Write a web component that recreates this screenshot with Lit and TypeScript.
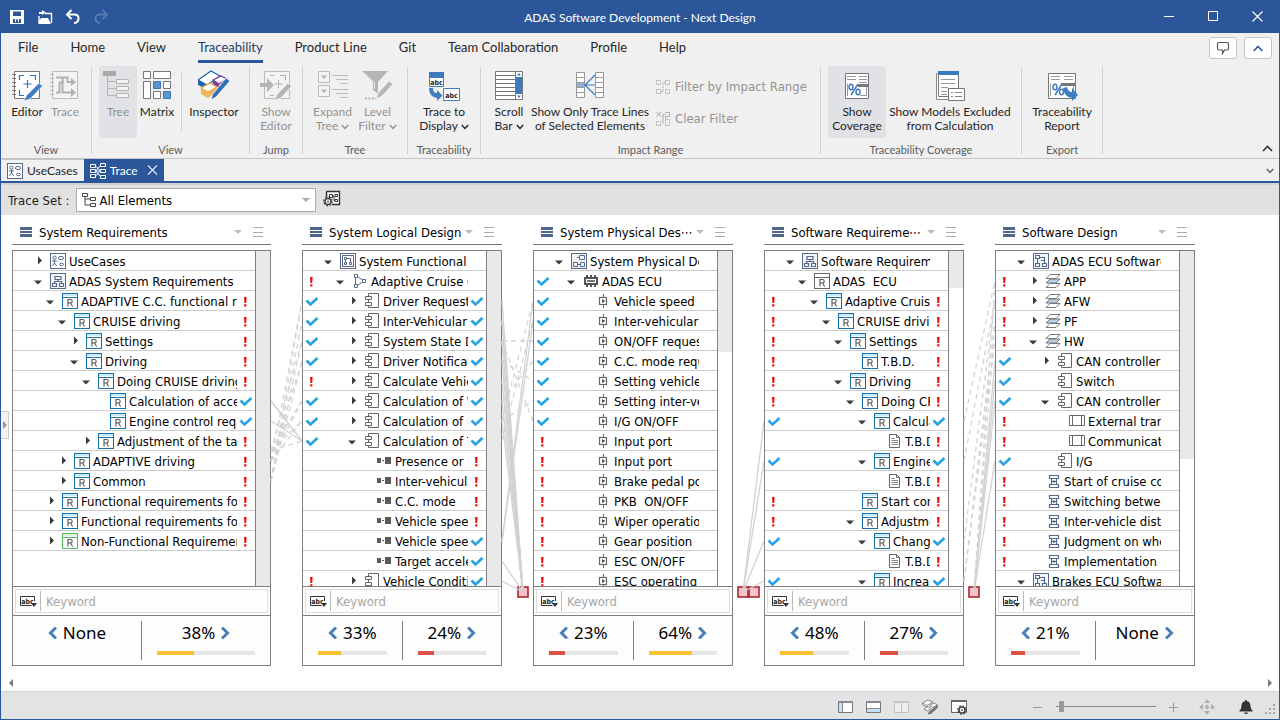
import { LitElement, html, css, svg, nothing } from "lit";
import { customElement, property } from "lit/decorators.js";
import { classMap } from "lit/directives/class-map.js";

const SANS = css`Lato, "Open Sans", sans-serif`;
const WIDE = css`"DejaVu Sans Condensed", "DejaVu Sans", sans-serif`;

/* ---------- small (16px) glyphs ---------- */
const reqIcon = (line: string, band: string) => svg`
  <rect x="0.5" y="0.5" width="15" height="15" fill="#fff" stroke=${line}/>
  <rect x="1" y="1" width="14" height="2" fill=${band}/>
  <path d="M1 4.5H15" stroke=${line}/>
  <path d="M6 13.5V6.5H8.6Q10.2 6.5 10.2 8.3Q10.2 10 8.6 10H6M8.5 10L10.6 13.5" fill="none" stroke="#555" stroke-width="1.1"/>`;

const glyphs: Record<string, unknown> = {
  req: reqIcon("#1570a6", "#cdeafa"),
  reqGreen: reqIcon("#5cb85c", "#dff3dc"),
  reqPlain: reqIcon("#666", "#fff"),
  usecase: svg`
    <rect x="0.5" y="0.5" width="15" height="15" fill="#fff" stroke="#56698b"/>
    <circle cx="4.5" cy="4.7" r="1.6" fill="none" stroke="#56698b"/>
    <path d="M4.5 6.5V10M2 8H7M2.3 13L4.5 10L6.7 13" fill="none" stroke="#56698b"/>
    <ellipse cx="11" cy="5" rx="2.6" ry="1.6" fill="none" stroke="#56698b"/>
    <ellipse cx="11.5" cy="11.5" rx="2" ry="1.2" fill="none" stroke="#56698b"/>`,
  hier: svg`
    <rect x="0.5" y="0.5" width="15" height="15" fill="#f4f6fa" stroke="#56698b"/>
    <path d="M5 3.5H11V6.5H5ZM2.5 10.5H6.5V13.5H2.5ZM9.5 10.5H13.5V13.5H9.5ZM8 6.5V8.5M4.5 10.5V8.5H11.5V10.5" fill="none" stroke="#56698b" stroke-width="1.2"/>`,
  func: svg`
    <rect x="0.5" y="0.5" width="15" height="15" fill="#fff" stroke="#56698b"/>
    <rect x="2.5" y="2.5" width="11" height="11" fill="none" stroke="#56698b"/>
    <path d="M4.5 4.5H6.5V6.5H4.5ZM9.5 9.5H11.5V11.5H9.5ZM4.5 9.5H6.5V11.5H4.5ZM6.5 5.5H10.5V9.5M5.5 6.5V9.5" fill="none" stroke="#56698b"/>`,
  flow: svg`
    <path d="M2.5 1.5H5.5V4.5H2.5ZM2.5 11.5H5.5V14.5H2.5ZM10.5 6.5H13.5V9.5H10.5ZM3.5 4.5V11.5M5.5 3.5L10.5 7M5.5 12.5L10.5 9" fill="#fff" stroke="#56698b"/>`,
  comp: svg`
    <path d="M4.5 3.5V0.5H14.5V14.5H4.5V12.5M4.5 6.5V9.5" fill="none" stroke="#666"/>
    <path d="M1.5 3.5H7.5V6.5H1.5ZM1.5 9.5H7.5V12.5H1.5Z" fill="#fff" stroke="#666"/>`,
  link: svg`<path d="M1 5H5V10H1ZM9 4H15V11H9Z" fill="#5a5a5a"/><path d="M6 7.5H8" stroke="#5a5a5a"/>`,
  phys: svg`
    <rect x="0.5" y="0.5" width="15" height="15" fill="#f4f6fa" stroke="#56698b"/>
    <path d="M8.5 2.5H13.5V6.5H8.5ZM2.5 9.5H6.5V13.5H2.5ZM9.5 9.5H13.5V13.5H9.5ZM6.5 11.5H9.5M6 4.5H8.5" fill="none" stroke="#56698b"/>`,
  chip: svg`
    <path d="M1 4H15V12H1Z" fill="#555"/><path d="M3 6H13V10H3Z" fill="#fff"/><path d="M4 7.2H12V8.8H4Z" fill="#555"/>
    <path d="M4 2V4M8 2V4M12 2V4M4 12V14M8 12V14M12 12V14" stroke="#555" stroke-width="2"/>`,
  port: svg`
    <path d="M8.5 1V4M8.5 12V15" stroke="#666"/><rect x="4.5" y="4.5" width="7" height="7" fill="#fff" stroke="#666" stroke-width="1.2"/>
    <path d="M7 6L10.5 8L7 10Z" fill="#555"/>`,
  doc: svg`
    <path d="M3.5 1.5H10.5L13.5 4.5V14.5H3.5ZM10.5 1.5V4.5H13.5" fill="#fff" stroke="#666"/>
    <path d="M5.5 5.5H9M5.5 7.5H12M5.5 9.5H12M5.5 11.5H12" stroke="#888"/>`,
  soft: svg`
    <rect x="0.5" y="0.5" width="15" height="15" fill="#f4f6fa" stroke="#56698b"/>
    <path d="M2.5 2.5H6.5V5.5H2.5ZM2.5 10.5H6.5V13.5H2.5ZM9.5 10.5H13.5V13.5H9.5ZM4.5 5.5V10.5M6.5 4.5H11.5V10.5M8 7.5H11.5" fill="none" stroke="#56698b" stroke-width="1.1"/>`,
  layers: svg`
    <path d="M5 1.5H15L11 5.5H1Z" fill="#fff" stroke="#777"/>
    <path d="M5 6H15L11 10H1Z" fill="#b8cde6" stroke="#777"/>
    <path d="M5 10.5H15L11 14.5H1Z" fill="#fff" stroke="#777"/>`,
  block: svg`<path d="M0.5 2.5H15.5V12.5H0.5ZM3.5 2.5V12.5M12.5 2.5V12.5" fill="#fff" stroke="#666"/>`,
  seq: svg`
    <path d="M4.5 2.5H13.5V5.5H4.5ZM4.5 11.5H13.5V14.5H4.5ZM6.5 5.5V11.5M11.5 5.5V11.5M6.5 8.5H11.5M9 7V10" fill="none" stroke="#56698b" stroke-width="1.2"/>`,
  trace: svg`
    <path d="M0.5 1.5H5.5V4.5H0.5ZM0.5 6.5H5.5V9.5H0.5ZM0.5 11.5H5.5V14.5H0.5ZM10.5 0.5H15.5V3.5H10.5ZM10.5 6.5H15.5V9.5H10.5ZM10.5 12.5H15.5V15.5H10.5ZM5.5 8H10.5M5.5 8L10.5 2.5M5.5 8L10.5 13.5M5.5 3L10.5 8M5.5 13L10.5 8" fill="none" stroke="#fff"/>`,
};

const glyph = (name: string) =>
  html`<svg class="g16" width="16" height="16" viewBox="0 0 16 16" aria-hidden="true">${glyphs[name]}</svg>`;

/* ---------- large ribbon pictures ---------- */
const big: Record<string, unknown> = {
  editor: svg`
    <path d="M3.5 1.5H28.5V28.5H3.5Z" fill="#fff" stroke="#777"/>
    <path d="M1 4.5H5M1 8.5H5M1 12.5H5M1 16.5H5M1 20.5H5M1 24.5H5" stroke="#777"/>
    <path d="M8.5 10V5.5H13M19 5.5H24.5V10M8.5 20V25.5H13M16.5 10V18M12.5 14H20.5" fill="none" stroke="#2f75b9" stroke-width="1.2"/>
    <path d="M28 13L31.5 16L19 29L13 31L15.5 25.5Z" fill="#3f7fc1" stroke="#fff" stroke-width="0.6"/>`,
  trace: svg`
    <path d="M3.5 1.5H28.5V28.5H3.5Z" fill="#f3f3f3" stroke="#bbb"/>
    <path d="M1 4.5H5M1 8.5H5M1 12.5H5M1 16.5H5M1 20.5H5M1 24.5H5" stroke="#bbb"/>
    <path d="M7 7.5H13.5V22.5H23M7 22.5H10.5V12.5H15M13.5 7.5H18.5V12H23" fill="none" stroke="#b2b2b2" stroke-width="2"/>
    <path d="M22 8L27 12L22 16ZM22 18L27 22.5L22 27Z" fill="#b2b2b2"/>`,
  tree: svg`
    <path d="M1 1H14V6H1Z" fill="#aaa"/>
    <path d="M5.5 6V25.5H14M5.5 11.5H14M5.5 18.5H14" fill="none" stroke="#b5b5b5"/>
    <path d="M14.5 9.5H26.5V13.5H14.5ZM14.5 16.5H26.5V20.5H14.5ZM14.5 23.5H26.5V27.5H14.5Z" fill="#f3f3f3" stroke="#b5b5b5"/>`,
  matrix: svg`
    <path d="M2.5 1.5H9.5V8.5H2.5ZM12.5 1.5H29.5V8.5H12.5ZM2.5 11.5H9.5V28.5H2.5ZM22.5 11.5H29.5V18.5H22.5ZM12.5 21.5H19.5V28.5H12.5Z" fill="#fff" stroke="#777"/>
    <path d="M12.5 11.5H19.5V18.5H12.5ZM22.5 21.5H29.5V28.5H22.5Z" fill="#5b95cd" stroke="#3a76b4"/>`,
  inspector: svg`
    <path d="M0 10L13 1L22 6L9 15Z" fill="#fff" stroke="#1f66ad" stroke-width="1.3"/><path d="M0 10L9 15V19L0 15Z" fill="#1f66ad"/>
    <path d="M15 10L23 6L29 9L21 14Z" fill="#fff" stroke="#7e3b9d" stroke-width="1.3"/><path d="M15 10L21 14V18L15 15Z" fill="#7e3b9d"/>
    <path d="M3 18L12 13L19 17L10 22Z" fill="#fff" stroke="#eaa743" stroke-width="1.3"/><path d="M3 18L10 22L19 17V22L10 28L3 24Z" fill="#edb45c"/>
    <path d="M28 8L32 11L18 27L13 30L14.5 24.5Z" fill="#2e6fb5" stroke="#fff" stroke-width="0.8"/>`,
  showEditor: svg`
    <path d="M4.5 1.5H29.5V28.5H4.5Z" fill="#f3f3f3" stroke="#bbb"/>
    <path d="M10 5.5H14M20 5.5H25.5V10M10 25.5H14M18.5 10V18M14.5 14H22.5" fill="none" stroke="#b2b2b2"/>
    <path d="M0 13H7V8L14 15L7 22V17H0Z" fill="#b5b5b5"/>
    <path d="M28 13L32 16L21 28L14 30.5L17 24.5Z" fill="#b5b5b5" stroke="#f3f3f3"/>`,
  expand: svg`
    <path d="M1.5 1.5H12.5V12.5H1.5ZM1.5 15.5H12.5V26.5H1.5Z" fill="#f3f3f3" stroke="#bbb"/>
    <path d="M4 5.5H10L7 9ZM4 19.5H10L7 23Z" fill="#b2b2b2"/>
    <path d="M15 5.5H31M19 9.5H31M23 13.5H31M15 19.5H31M19 23.5H31M23 27.5H31" stroke="#bbb"/>`,
  level: svg`
    <path d="M0 1H26L16 12V24L11 20V12Z" fill="#b5b5b5"/><path d="M3 3.5L12.5 13V19" fill="none" stroke="#e8e8e8"/>
    <path d="M27 11L31 14L20 26L14 29L16 23Z" fill="#b5b5b5" stroke="#f0f0f0"/><path d="M3 28.5H14" stroke="#b5b5b5" stroke-width="2" stroke-dasharray="2 1.5"/>`,
  display: svg`
    <path d="M1.5 2.5H15.5V16.5H1.5Z" fill="#fff" stroke="#3f7fc1"/><path d="M1 2H16V8H1Z" fill="#3a7abd"/>
    <path d="M15.5 18.5H31.5V30.5H15.5Z" fill="#fff" stroke="#3f7fc1"/>
    <path d="M1 18H5Q5 23 9 23V20L14.5 25.5L9 31V28Q1 27 1 18Z" fill="#3f7fc1"/>
    <text x="8.5" y="14.5" text-anchor="middle" class="abc">abc</text><text x="23.5" y="27.5" text-anchor="middle" class="abc">abc</text>`,
  scroll: svg`
    <path d="M2.5 1.5H29.5V29.5H2.5Z" fill="#fff" stroke="#777"/>
    <path d="M3 5.5H22M3 9.5H22M3 13.5H22M3 17.5H22M3 21.5H22M3 25.5H22M22.5 2V29" stroke="#777"/>
    <path d="M23 7H29V24H23ZM24 5.5L26 3L28 5.5ZM24 25.5L26 28L28 25.5Z" fill="#3a7abd"/>`,
  only: svg`
    <path d="M2.5 2.5H10.5V27.5H2.5ZM21.5 2.5H29.5V27.5H21.5ZM2.5 7.5H10.5M2.5 12.5H10.5M2.5 17.5H10.5M2.5 22.5H10.5M21.5 7.5H29.5M21.5 12.5H29.5M21.5 17.5H29.5M21.5 22.5H29.5" fill="#fff" stroke="#999"/>
    <path d="M3 13H10V17H3Z" fill="#8fb2da"/><path d="M21 5L11 15L21 25M11 15H21" fill="none" stroke="#3a7abd" stroke-width="1.2"/>`,
  coverage: svg`
    <path d="M4.5 3.5H27.5V28.5H4.5Z" fill="#fff" stroke="#777"/>
    <path d="M6 6.5H15M6 9.5H15M18 6.5H26M18 9.5H26M18 12.5H26" stroke="#999"/><path d="M17 14H27V17H17Z" fill="#777"/>
    <path d="M6.5 26V13.5M25.5 17V25.5H19" fill="none" stroke="#999"/>
    <g fill="none" stroke="#3a7abd" stroke-width="1.4"><ellipse cx="10" cy="17" rx="2" ry="2.8"/><ellipse cx="17" cy="22" rx="2" ry="2.8"/><path d="M17 14L10 25"/></g>`,
  models: svg`
    <path d="M2.5 3.5H22.5V29.5H2.5Z" fill="#fff" stroke="#888"/><path d="M4.5 1.5H24.5V26.5H4.5Z" fill="#fff" stroke="#777"/>
    <path d="M4 1H25V5H4Z" fill="#3a7abd"/><path d="M7 9.5H21M7 13.5H21M7 17.5H14M7 21.5H13M7 24.5H13" stroke="#999"/>
    <path d="M14.5 18.5H30.5V30.5H14.5Z" fill="#fff" stroke="#777"/><path d="M17 22.5H19M21 22.5H28M17 26.5H19M21 26.5H28" stroke="#888"/>`,
  report: svg`
    <path d="M2.5 3.5H29.5V28.5H2.5Z" fill="#fff" stroke="#777"/>
    <path d="M5 6.5H14M5 9.5H14M18 6.5H27M18 9.5H27" stroke="#999"/><path d="M15 13H29V16H15Z" fill="#777"/>
    <path d="M4.5 26V13.5M27.5 16V20" fill="none" stroke="#999"/>
    <g fill="none" stroke="#3a7abd" stroke-width="1.4"><ellipse cx="9" cy="17" rx="2" ry="2.8"/><ellipse cx="15.5" cy="22" rx="2" ry="2.8"/><path d="M16 14L9 25"/></g>
    <path d="M17 18L21 17Q22 22 26 22V18L32 25L26 31V28Q18 27 17 18Z" fill="#3f7fc1"/>`,
};
const picture = (name: string) =>
  html`<svg width="32" height="32" viewBox="0 0 32 32" aria-hidden="true">${big[name]}</svg>`;

const gear = (cx: number, cy: number) => svg`
  <circle cx=${cx} cy=${cy} r="3" fill="#fff" stroke="#444" stroke-width="1.6"/>
  <circle cx=${cx} cy=${cy} r="4.2" fill="none" stroke="#444" stroke-width="1.4" stroke-dasharray="1.6 1.7"/>
  <circle cx=${cx} cy=${cy} r="0.9" fill="#444"/>`;

type Mark = "" | "v" | "!";
/* [depth, toggle, glyph, text, left mark, right mark] */
type Row = [number, "" | ">" | "v", string, string, Mark, Mark];

interface Column {
  title: string; wide?: boolean; thumb: number; rows: Row[];
  left: number | null; right: number | null;
}

const columns: Column[] = [
  { title: "System Requirements", wide: true, thumb: 100, left: null, right: 38, rows: [
    [0, ">", "usecase", "UseCases", "", ""],
    [0, "v", "hier", "ADAS System Requirements", "", ""],
    [1, "v", "req", "ADAPTIVE C.C. functional requirements", "", "!"],
    [2, "v", "req", "CRUISE driving", "", "!"],
    [3, ">", "req", "Settings", "", "!"],
    [3, "v", "req", "Driving", "", "!"],
    [4, "v", "req", "Doing CRUISE driving", "", "!"],
    [5, "", "req", "Calculation of acceleration", "", "v"],
    [5, "", "req", "Engine control request", "", "v"],
    [4, ">", "req", "Adjustment of the target", "", "!"],
    [2, ">", "req", "ADAPTIVE driving", "", "!"],
    [2, ">", "req", "Common", "", "!"],
    [1, ">", "req", "Functional requirements for", "", "!"],
    [1, ">", "req", "Functional requirements for", "", "!"],
    [1, ">", "reqGreen", "Non-Functional Requirements", "", "!"],
  ] },
  { title: "System Logical Design", thumb: 100, left: 33, right: 24, rows: [
    [0, "v", "func", "System Functional", "", ""],
    [1, "v", "flow", "Adaptive Cruise Control", "!", ""],
    [2, ">", "comp", "Driver Request", "v", "v"],
    [2, ">", "comp", "Inter-Vehicular", "v", "v"],
    [2, ">", "comp", "System State Decision", "v", "v"],
    [2, ">", "comp", "Driver Notification", "v", "v"],
    [2, ">", "comp", "Calculate Vehicle", "!", "v"],
    [2, ">", "comp", "Calculation of Vehicle", "v", "v"],
    [2, ">", "comp", "Calculation of Inter", "v", "v"],
    [2, "v", "comp", "Calculation of Target", "v", "v"],
    [3, "", "link", "Presence or absence", "", "!"],
    [3, "", "link", "Inter-vehicular", "", "!"],
    [3, "", "link", "C.C. mode", "", "!"],
    [3, "", "link", "Vehicle speed", "", "!"],
    [3, "", "link", "Vehicle speed", "", "v"],
    [3, "", "link", "Target acceleration", "", "v"],
    [2, ">", "comp", "Vehicle Condition", "!", "v"],
  ] },
  { title: "System Physical Des⋯", thumb: 30, left: 23, right: 64, rows: [
    [0, "v", "phys", "System Physical Design", "", ""],
    [1, "v", "chip", "ADAS ECU", "v", ""],
    [2, "", "port", "Vehicle speed", "v", ""],
    [2, "", "port", "Inter-vehicular", "v", ""],
    [2, "", "port", "ON/OFF request", "v", ""],
    [2, "", "port", "C.C. mode request", "v", ""],
    [2, "", "port", "Setting vehicle", "v", ""],
    [2, "", "port", "Setting inter-vehicular", "v", ""],
    [2, "", "port", "I/G ON/OFF", "v", ""],
    [2, "", "port", "Input port", "!", ""],
    [2, "", "port", "Input port", "!", ""],
    [2, "", "port", "Brake pedal position", "!", ""],
    [2, "", "port", "PKB\u00a0 ON/OFF", "!", ""],
    [2, "", "port", "Wiper operation", "!", ""],
    [2, "", "port", "Gear position", "!", ""],
    [2, "", "port", "ESC ON/OFF", "!", ""],
    [2, "", "port", "ESC operating", "!", ""],
  ] },
  { title: "Software Requireme⋯", thumb: 11, left: 48, right: 27, rows: [
    [0, "v", "hier", "Software Requirements", "", ""],
    [1, "v", "reqPlain", "ADAS\u00a0 ECU", "", ""],
    [2, "v", "req", "Adaptive Cruise", "!", "!"],
    [3, "v", "req", "CRUISE driving", "!", "!"],
    [4, "v", "req", "Settings", "!", "!"],
    [5, "", "req", "T.B.D.", "!", "!"],
    [4, "v", "req", "Driving", "!", "!"],
    [5, "v", "req", "Doing CRUISE", "!", "!"],
    [6, "v", "req", "Calculation", "v", "v"],
    [7, "", "doc", "T.B.D.", "", "!"],
    [6, "v", "req", "Engine", "v", "v"],
    [7, "", "doc", "T.B.D.", "", "!"],
    [5, "", "req", "Start control", "!", "!"],
    [5, "v", "req", "Adjustment", "!", "!"],
    [6, "v", "req", "Change", "v", "v"],
    [7, "", "doc", "T.B.D.", "", "!"],
    [6, "v", "req", "Increase", "v", "v"],
  ] },
  { title: "Software Design", thumb: 62, left: 21, right: null, rows: [
    [0, "v", "soft", "ADAS ECU Software", "", ""],
    [1, ">", "layers", "APP", "!", ""],
    [1, ">", "layers", "AFW", "!", ""],
    [1, ">", "layers", "PF", "!", ""],
    [1, "v", "layers", "HW", "!", ""],
    [2, ">", "comp", "CAN controller", "v", ""],
    [2, "", "comp", "Switch", "v", ""],
    [2, "v", "comp", "CAN controller", "v", ""],
    [3, "", "block", "External transmission", "!", ""],
    [3, "", "block", "Communication", "!", ""],
    [2, "", "comp", "I/G", "v", ""],
    [1, "", "seq", "Start of cruise control", "!", ""],
    [1, "", "seq", "Switching between", "!", ""],
    [1, "", "seq", "Inter-vehicle distance", "!", ""],
    [1, "", "seq", "Judgment on whether", "!", ""],
    [1, "", "seq", "Implementation", "!", ""],
    [0, "v", "soft", "Brakes ECU Software", "", ""],
  ] },
];

/* Trace lines between neighbouring columns: x1, y1, x2, y2 measured from the gap's top left corner. */
interface Links { solid: number[][]; dashed: number[][]; ends: number[] }
const rowY = (n: number) => 46 + 20 * n;
const links: Links[] = [
  { solid: [[0, rowY(7), 31, rowY(9)], [0, rowY(8), 31, rowY(9)]],
    dashed: [
      ...[2, 3, 4, 5].map((t) => [0, rowY(11), 31, rowY(t)]),
      ...[2, 5, 7, 8].map((t) => [0, rowY(10), 31, rowY(t)]),
      ...[4, 7, 8, 9].map((t) => [0, rowY(9) + 10, 31, rowY(t)]),
    ], ends: [] },
  { solid: [...[2, 3, 4, 5, 6, 7, 8, 15, 16].map((s) => [0, rowY(s), 21, 377]), [0, rowY(14), 31, rowY(2)], [0, rowY(14), 31, rowY(3)]],
    dashed: [[0, 126, 31, 126], [0, 126, 31, 206], [0, 146, 31, 166], [0, 206, 31, 186], [0, 206, 31, 86], [0, 226, 31, 106], [0, 186, 31, 146], [0, 126, 20, 377], [0, 106, 20, 377]], ends: [21] },
  { solid: [[10, 377, 31, rowY(8)], [10, 377, 31, rowY(10)], [10, 377, 31, rowY(14)], [10, 377, 31, rowY(16)]], dashed: [], ends: [10, 21] },
  { solid: [[10, 377, 31, rowY(5)], [10, 377, 31, rowY(6)], [10, 377, 31, rowY(7)], [10, 377, 31, rowY(10)]],
    dashed: [[0, 206, 31, 66], [0, 246, 31, 86], [0, 326, 31, 86], [0, 366, 31, 106], [0, 366, 31, 126], [10, 377, 31, 66], [10, 377, 31, 106]], ends: [10] },
];

@customElement("trace-column")
class TraceColumn extends LitElement {
  @property({ attribute: false }) data!: Column;

  static styles = css`
    :host { display: flex; flex-direction: column; font: 13px/18px ${WIDE}; color: #1e1e1e; }
    button { border: 0; padding: 0; background: none; display: grid; place-items: center; }
    .head { height: 24px; border-bottom: 1px solid #777; display: flex; align-items: center; padding: 0 7px 0 8px; margin-bottom: 5px; }
    .head h2 { flex: 1; margin: 0 0 0 7px; padding-top: 1px; font: inherit; color: #000; white-space: nowrap; overflow: hidden; }
    .head button { width: 12px; height: 16px; flex: none; }
    .head button + button { margin-left: 8px; }
    .head svg { flex: none; }
    .box { flex: 1; min-height: 0; border: 1px solid #7f7f7f; display: flex; flex-direction: column; background: #fff; }
    .body { flex: 1; min-height: 0; display: flex; }
    .tree { flex: 1; min-width: 0; overflow: hidden; margin: 0; padding: 0; list-style: none; }
    .row { height: 19px; border-bottom: 1px solid #ccc; display: flex; align-items: center; }
    .mark { width: 18px; flex: none; display: grid; place-items: center; }
    .toggle { width: 19px; height: 19px; flex: none; }
    .g16 { flex: none; margin-right: 3px; }
    .label { flex: 1; min-width: 0; padding-top: 3px; overflow: hidden; white-space: nowrap; color: #000; }
    .track { width: 14px; border-left: 1px solid #7f7f7f; }
    .thumb { background: #e9e9e9; }
    .find { border-top: 1px solid #7f7f7f; background: #fdfdfd; padding: 2px; }
    .find-in { height: 22px; border: 1px solid #ddd; display: flex; align-items: center; }
    .find-in button { width: 25px; height: 20px; border-right: 1px solid #bbb; }
    input { flex: 1; min-width: 0; border: 0; outline: 0; padding: 1px 5px 0 5px; background: none; font: inherit; }
    input::placeholder { color: #a6a6a6; opacity: 1; }
    .cover { height: 50px; box-sizing: border-box; border-top: 1px solid #7f7f7f; background: #fdfdfd; display: grid; grid-template-columns: 1fr 1px 1fr; }
    .rule { background: #7f7f7f; margin: 5px 0; }
    .half { padding: 7px 15px 0; min-width: 0; }
    .value { display: flex; justify-content: center; align-items: center; gap: 6px; font-family: "Noto Sans", sans-serif; font-size: 17px; line-height: 20px; color: #000; }
    .bar { height: 4px; margin-top: 8px; background: #e5e5e5; }
    .fill { height: 4px; background: #dc5244; }
    .fill.mid { background: #fbbf30; }
    .abc { font: bold 7px "DejaVu Sans Condensed", sans-serif; fill: #222; }
  `;

  mark(m: Mark) {
    if (m === "v") return html`<svg width="14" height="12" viewBox="0 0 14 12" role="img" aria-label="Covered"><path d="M1.5 5.5L5.5 9.5L12.5 3" fill="none" stroke="#27a3e2" stroke-width="2.6"/></svg>`;
    if (m === "!") return html`<svg width="14" height="12" viewBox="0 0 14 12" role="img" aria-label="Not covered"><path d="M5 2H7.6L7.2 8H5.4ZM5.2 9.3H7.4V11.5H5.2Z" fill="#f20d0d"/></svg>`;
    return nothing;
  }

  row([depth, toggle, icon, text, left, right]: Row) {
    return html`<li class="row" role="treeitem" aria-level=${depth + 1}>
      <span class="mark">${this.mark(left)}</span>
      <span style="width:${depth * 12}px"></span>
      ${toggle
        ? html`<button class="toggle" aria-label=${toggle === "v" ? "Collapse" : "Expand"}>
            <svg width="19" height="19" viewBox="0 0 19 19"><path d=${toggle === "v" ? "M3 9.5H11L7 13.5Z" : "M7 5.5L11 9.5L7 13.5Z"} fill="#3a3a3a"/></svg>
          </button>`
        : html`<span class="toggle"></span>`}
      ${glyph(icon)}
      <span class="label">${text}</span>
      <span class="mark">${this.mark(right)}</span>
    </li>`;
  }

  half(v: number | null, side: "left" | "right") {
    const arrow = html`<svg width="9" height="12" viewBox="0 0 9 12" aria-hidden="true">
      <path d=${side === "left" ? "M8 0.5L2.5 6L8 11.5" : "M1 0.5L6.5 6L1 11.5"} fill="none" stroke="#4a7fb8" stroke-width="3"/></svg>`;
    const text = html`<span>${v === null ? "None" : v + "%"}</span>`;
    return html`<div class="half">
      <div class="value">${side === "left" ? [arrow, text] : [text, arrow]}</div>
      ${v === null ? nothing : html`<div class="bar" role="progressbar" aria-label="Coverage" aria-valuenow=${v}>
        <div class=${classMap({ fill: true, mid: v >= 30 })} style="width:${v}%"></div></div>`}
    </div>`;
  }

  render() {
    const d = this.data;
    return html`
      <header class="head">
        <svg width="12" height="10" viewBox="0 0 12 10"><path d="M0 0H12V3H0ZM0 4H12V6H0ZM0 7H12V10H0Z" fill="#50658a"/></svg>
        <h2>${d.title}</h2>
        <button aria-label="Choose model"><svg width="8" height="4"><path d="M0 0H8L4 4Z" fill="#bbb"/></svg></button>
        <button aria-label="Column menu"><svg width="10" height="10"><path d="M0 0.5H10M0 5.5H10M0 9.5H10" stroke="#aaa"/></svg></button>
      </header>
      <section class="box">
        <div class="body">
          <ul class="tree" role="tree" aria-label=${d.title}>${d.rows.map((r) => this.row(r))}</ul>
          <div class="track"><div class="thumb" style="height:${d.thumb}%"></div></div>
        </div>
        <div class="find"><div class="find-in">
          <button aria-label="Search options"><svg width="18" height="14" viewBox="0 0 18 14">
            <path d="M12.5 11.5H1.5V2.5H15.5V7" fill="none" stroke="#333"/><text x="8.5" y="9.5" text-anchor="middle" class="abc">abc</text>
            <path d="M12 9H18L15 13Z" fill="#333"/></svg></button>
          <input type="text" placeholder="Keyword" aria-label="Keyword" />
        </div></div>
        <div class="cover">${this.half(d.left, "left")}<div class="rule"></div>${this.half(d.right, "right")}</div>
      </section>`;
  }
}

@customElement("app-root")
class AppRoot extends LitElement {
  static styles = css`
    :host { display: flex; flex-direction: column; height: 100vh; box-sizing: border-box; border: 1px solid #2b579a; border-top: 0; background: #fff; font: 12px/14px ${SANS}; color: #262626; overflow: hidden; }
    button { border: 0; padding: 0; margin: 0; background: none; font: inherit; color: inherit; }
    .title { height: 33px; background: #2b579a; color: #fff; display: grid; grid-template-columns: 1fr auto 1fr; align-items: center; flex: none; }
    .title h1 { margin: 0; padding-top: 2px; font: 12px/16px ${SANS}; }
    .quick { display: flex; gap: 12px; padding-left: 8px; }
    .quick button, .wc button { display: grid; place-items: center; }
    .quick svg { display: block; }
    .wc { display: flex; justify-content: flex-end; }
    .wc button { width: 44px; height: 32px; }
    .menu { height: 30px; background: #f0f0f0; display: flex; flex: none; padding: 0 7px 0 17px; font-size: 13px; line-height: 29px; }
    .menu nav { display: flex; gap: 32px; flex: 1; }
    .menu a { color: #262626; text-decoration: none; box-sizing: border-box; height: 30px; }
    .menu a.on { border-bottom: 3px solid #2b579a; color: #1e3d6d; }
    .menu .pill { width: 28px; height: 22px; margin: 4px 0 0 7px; background: #fff; border: 1px solid #c4c4c4; border-radius: 3px; display: grid; place-items: center; }
    .ribbon { height: 95px; background: #f0f0f0; border-bottom: 1px solid #c6c6c6; display: flex; flex: none; }
    .group { position: relative; display: flex; flex-direction: column; padding: 3px 8px 0 7px; }
    .group::after { content: ""; position: absolute; right: 0; top: 4px; bottom: 4px; width: 1px; background: #d0d0d0; }
    .tools { display: flex; height: 72px; }
    .tool { display: flex; flex-direction: column; align-items: center; padding-top: 4px; white-space: nowrap; border-radius: 3px; }
    .tool svg { flex: none; margin-bottom: 3px; }
    .tool .chev { margin: 0 0 0 3px; }
    .on-tool { background: #e0e2e5; }
    .dim { color: #939393; }
    .w38 { width: 38px; } .w40 { width: 40px; } .w42 { width: 42px; } .w45 { width: 45px; } .w56 { width: 56px; }
    .w58 { width: 58px; } .w66 { width: 66px; } .w120 { width: 120px; } .w128 { width: 128px; }
    .bar { width: 1px; margin: 7px 4px; background: #d0d0d0; }
    .name { text-align: center; color: #5c5c5c; font-size: 11px; margin-top: 5px; white-space: nowrap; }
    .stack { display: flex; flex-direction: column; gap: 8px; padding: 9px 0 0 6px; width: 157px; color: #939393; font: 13px/24px ${WIDE}; }
    .stack button { display: flex; align-items: center; gap: 5px; height: 24px; white-space: nowrap; }
    .collapse { margin: auto 6px 3px auto; }
    .abc { font: bold 7px "DejaVu Sans Condensed", sans-serif; fill: #222; }
    .tabs { height: 22px; background: #f0f0f0; border-bottom: 2px solid #2b579a; display: flex; align-items: center; flex: none; padding: 0 5px 0 1px; }
    .tab { display: flex; align-items: center; gap: 4px; height: 22px; padding: 0 6px 0 5px; border-top: 1px solid #c6c6c6; box-sizing: border-box; }
    .tab.on { background: #2b579a; color: #fff; border-color: #2b579a; padding: 0 6px; }
    .tab.on button { margin-left: 5px; }
    .tabs .chev-end { margin-left: auto; color: #666; }
    .bar-set { height: 30px; border-top: 2px solid #cfcfd4; background: #e1e1e1; display: flex; align-items: center; gap: 7px; padding: 0 7px; flex: none; font: 13px/18px ${WIDE}; color: #1e1e1e; }
    .bar-set label { padding-top: 2px; }
    .pick { width: 240px; border: 1px solid #acacac; background: #fff; display: flex; align-items: center; padding-left: 5px; box-sizing: border-box; height: 24px; }
    .pick select { appearance: none; border: 0; background: none; font: inherit; color: #000; flex: 1; padding: 1px 0 0 3px; outline: 0; }
    .pick .down { margin-right: 5px; }
    .canvas { position: relative; flex: 1; min-height: 0; display: flex; padding: 5px 11px 11px; background: #fff; }
    trace-column { width: 200px; flex: none; }
    trace-column.wide { width: 259px; }
    .gap { width: 31px; flex: none; margin-top: -5px; }
    .gap svg { display: block; overflow: visible; }
    .handle { position: absolute; left: 0; top: 196px; width: 8px; height: 28px; border: 1px solid #ccc; border-left: 0; background: #f3f3f3; display: grid; place-items: center; }
    .hscroll { height: 14px; display: flex; justify-content: space-between; align-items: center; padding: 0 7px 2px 8px; box-sizing: border-box; flex: none; }
    .status { height: 28px; background: #e2e3e5; border-top: 1px solid #d2d3d5; box-sizing: border-box; display: flex; align-items: center; justify-content: flex-end; flex: none; padding: 2px 2px 0 0; }
    .status svg { display: block; }
    .views { display: flex; gap: 12px; margin-right: 66px; }
    .zoom { display: flex; align-items: center; gap: 13px; margin-right: 20px; }
    input[type="range"] { appearance: none; width: 100px; height: 12px; margin: 0; background: linear-gradient(#888, #888) center / 100% 1px no-repeat; }
    input[type="range"]::-webkit-slider-thumb { appearance: none; width: 5px; height: 11px; background: #9a9a9a; }
    .bell { margin: 0 12px 0 24px; }
  `;

  chev() {
    return html`<svg class="chev" width="8" height="6" viewBox="0 0 8 6" aria-hidden="true"><path d="M0.8 1L4 4.5L7.2 1" fill="none" stroke="currentColor" stroke-width="1.5"/></svg>`;
  }

  tool(icon: string, lines: string[], cls: string, drop = false) {
    return html`<button class="tool ${cls}">${picture(icon)}
      ${lines.map((l, i) => html`<span>${l}${drop && i === lines.length - 1 ? this.chev() : nothing}</span>`)}</button>`;
  }

  gap(l: Links) {
    return html`<div class="gap"><svg width="31" height="400" viewBox="0 0 31 400" aria-hidden="true">
      ${l.ends.map((x) => svg`<rect x=${x - 5} y="372" width="10" height="10" fill="#fcc0cb" stroke="#a5282c" stroke-width="1.6"/>`)}
      ${l.dashed.map(([a, b, c, d]) => svg`<path d="M${a} ${b}L${c} ${d}" stroke="#d4d4d4" stroke-width="1.3" stroke-dasharray="5 4"/>`)}
      ${l.solid.map(([a, b, c, d]) => svg`<path d="M${a} ${b}L${c} ${d}" stroke="#d2d2d2" stroke-width="1.3"/>`)}
    </svg></div>`;
  }

  render() {
    return html`
      <header class="title">
        <div class="quick">
          <button aria-label="Save"><svg width="16" height="16" viewBox="0 0 16 16"><path d="M1 1H15V15H1Z" fill="#fff"/><path d="M4 2.5H12V7H4ZM4 10H12V14H4Z" fill="#2b579a"/><path d="M6 10H10V13H6Z" fill="#fff"/><path d="M7 10.5H9V13H7Z" fill="#2b579a"/></svg></button>
          <button aria-label="Open"><svg width="16" height="16" viewBox="0 0 16 16"><path d="M2 13V7M8 4.5H14.5V14" fill="none" stroke="#fff" stroke-width="1.4"/><path d="M1 14L4 9H11L14 15H2Z" fill="#fff"/><path d="M2 5V3H5V1L9 3.5L5 6V5Z" fill="#fff"/></svg></button>
          <button aria-label="Undo"><svg width="16" height="16" viewBox="0 0 16 16"><path d="M3 5.5H9.5Q13.5 5.5 13.5 9.5Q13.5 13.5 9 14" fill="none" stroke="#fff" stroke-width="2"/><path d="M6.5 1L2 5.5L6.5 10" fill="none" stroke="#fff" stroke-width="2"/></svg></button>
          <button aria-label="Redo" disabled><svg width="16" height="16" viewBox="0 0 16 16"><path d="M13 5.5H6.5Q2.5 5.5 2.5 9.5Q2.5 13.5 7 14M9.5 1L14 5.5L9.5 10" fill="none" stroke="#5579b2" stroke-width="1.8"/></svg></button>
        </div>
        <h1>ADAS Software Development - Next Design</h1>
        <div class="wc">
          <button aria-label="Minimize"><svg width="11" height="11"><path d="M0 5.5H10" stroke="#fff"/></svg></button>
          <button aria-label="Maximize"><svg width="11" height="11"><rect x="0.5" y="0.5" width="9" height="9" fill="none" stroke="#fff"/></svg></button>
          <button aria-label="Close"><svg width="11" height="11"><path d="M0.5 0.5L10.5 10.5M10.5 0.5L0.5 10.5" stroke="#fff" stroke-width="1.1"/></svg></button>
        </div>
      </header>
      <div class="menu">
        <nav>${["File", "Home", "View", "Traceability", "Product Line", "Git", "Team Collaboration", "Profile", "Help"].map(
          (t) => html`<a href="#" class=${classMap({ on: t === "Traceability" })}>${t}</a>`)}</nav>
        <button class="pill" aria-label="Feedback"><svg width="14" height="14" viewBox="0 0 14 14"><path d="M3 1.5H11Q12.5 1.5 12.5 3V7.5Q12.5 9 11 9H8.5L6.5 12.5V9H3Q1.5 9 1.5 7.5V3Q1.5 1.5 3 1.5Z" fill="none" stroke="#555" stroke-width="1.2"/></svg></button>
        <button class="pill" aria-label="Hide"><svg width="10" height="7"><path d="M0.7 6L5 1.5L9.3 6" fill="none" stroke="#2b579a" stroke-width="1.6"/></svg></button>
      </div>
      <section class="ribbon">
        <div class="group"><div class="tools">${this.tool("editor", ["Editor"], "w38")}${this.tool("trace", ["Trace"], "w38 dim")}</div><div class="name">View</div></div>
        <div class="group"><div class="tools">${this.tool("tree", ["Tree"], "w38 dim on-tool")}${this.tool("matrix", ["Matrix"], "w40")}<span class="bar"></span>${this.tool("inspector", ["Inspector"], "w56")}</div><div class="name">View</div></div>
        <div class="group"><div class="tools">${this.tool("showEditor", ["Show", "Editor"], "w38 dim")}</div><div class="name">Jump</div></div>
        <div class="group"><div class="tools">${this.tool("expand", ["Expand", "Tree"], "w45 dim", true)}${this.tool("level", ["Level", "Filter"], "w45 dim", true)}</div><div class="name">Tree</div></div>
        <div class="group"><div class="tools">${this.tool("display", ["Trace to", "Display"], "w58", true)}</div><div class="name">Traceability</div></div>
        <div class="group"><div class="tools">${this.tool("scroll", ["Scroll", "Bar"], "w42", true)}${this.tool("only", ["Show Only Trace Lines", "of Selected Elements"], "w120")}
          <div class="stack">
            <button><svg width="14" height="16" viewBox="0 0 14 16"><path d="M0.5 1.5H4.5V5.5H0.5ZM0.5 10.5H4.5V14.5H0.5ZM9.5 1.5H13.5V5.5H9.5ZM9.5 10.5H13.5V14.5H9.5ZM4.5 12.5H7V3.5H9.5" fill="none" stroke="#b0b0b0" stroke-dasharray="2 1"/></svg>Filter by Impact Range</button>
            <button><svg width="14" height="16" viewBox="0 0 14 16"><path d="M0.5 1L5 5.5M5 1L0.5 5.5M9.5 1.5H13.5V5.5H9.5V7.5M7 12.5V3.5H9.5" fill="none" stroke="#aaa"/><path d="M0.5 10.5H4.5V14.5H0.5ZM9.5 8.5H13.5V14.5H9.5Z" fill="none" stroke="#b0b0b0" stroke-dasharray="2 1"/></svg>Clear Filter</button>
          </div></div><div class="name">Impact Range</div></div>
        <div class="group"><div class="tools">${this.tool("coverage", ["Show", "Coverage"], "w58 on-tool")}${this.tool("models", ["Show Models Excluded", "from Calculation"], "w128")}</div><div class="name">Traceability Coverage</div></div>
        <div class="group"><div class="tools">${this.tool("report", ["Traceability", "Report"], "w66")}</div><div class="name">Export</div></div>
        <button class="collapse" aria-label="Collapse ribbon"><svg width="11" height="7"><path d="M1 6L5.5 1.5L10 6" fill="none" stroke="#333" stroke-width="1.6"/></svg></button>
      </section>
      <nav class="tabs">
        <button class="tab">${glyph("usecase")}UseCases</button>
        <div class="tab on">${glyph("trace")}Trace<button aria-label="Close tab"><svg width="11" height="10" viewBox="0 0 11 10"><path d="M1 0.5L10 9.5M10 0.5L1 9.5" stroke="#dbe4f2" stroke-width="1.3"/></svg></button></div>
        <button class="chev-end" aria-label="More tabs">${this.chev()}</button>
      </nav>
      <div class="bar-set">
        <label for="set">Trace Set :</label>
        <div class="pick">
          <svg width="14" height="14" viewBox="0 0 14 14"><path d="M0.5 0.5H5.5V3.5H0.5ZM8.5 4.5H13.5V7.5H8.5ZM8.5 10.5H13.5V13.5H8.5ZM3 3.5V12H8.5M3 6H8.5" fill="none" stroke="#444"/></svg>
          <select id="set"><option>All Elements</option></select>
          <svg class="down" width="8" height="4"><path d="M0 0H8L4 4Z" fill="#aaa"/></svg>
        </div>
        <button aria-label="Trace set settings"><svg width="18" height="18" viewBox="0 0 18 18"><path d="M3.5 2.5H16.5V15.5H9M3.5 2.5V9" fill="#fff" stroke="#333" stroke-width="1.4"/><path d="M6.5 5.5H9.5V8.5H6.5ZM12 5.5H14.5V7.5H12ZM12 10.5H14.5V12.5H12ZM9.5 7H11V11.5H12" fill="none" stroke="#333"/>${gear(5, 12.5)}</svg></button>
      </div>
      <main class="canvas">
        ${columns.map((c, i) => html`<trace-column class=${classMap({ wide: !!c.wide })} .data=${c}></trace-column>${links[i] ? this.gap(links[i]) : nothing}`)}
        <button class="handle" aria-label="Open side panel"><svg width="4" height="8"><path d="M0 0L4 4L0 8Z" fill="#999"/></svg></button>
      </main>
      <div class="hscroll">
        <svg width="4" height="8"><path d="M4 0L0 4L4 8Z" fill="#777"/></svg>
        <svg width="4" height="8"><path d="M0 0L4 4L0 8Z" fill="#777"/></svg>
      </div>
      <footer class="status">
        <div class="views">
          <button aria-label="Left pane"><svg width="16" height="16" viewBox="0 0 16 16"><path d="M0.5 2.5H14.5V13.5H0.5Z" fill="#fff" stroke="#77777c"/><path d="M1 4H4V13H1Z" fill="#c3dffb"/><path d="M0 2H15V4H0ZM4 4H5V13H4Z" fill="#8a8a90"/></svg></button>
          <button aria-label="Bottom pane"><svg width="16" height="16" viewBox="0 0 16 16"><path d="M0.5 2.5H14.5V13.5H0.5Z" fill="#fff" stroke="#77777c"/><path d="M1 10H14V13H1Z" fill="#c3dffb"/><path d="M0 2H15V4H0ZM1 9H14V10H1Z" fill="#8a8a90"/></svg></button>
          <button aria-label="Split pane" disabled><svg width="16" height="16" viewBox="0 0 16 16"><path d="M0.5 2.5H14.5V13.5H0.5ZM7.5 4V13" fill="#eee" stroke="#c2c2c4"/><path d="M0 2H15V4H0Z" fill="#c6c6c8"/></svg></button>
          <button aria-label="Inspector"><svg width="17" height="16" viewBox="0 0 17 16"><path d="M0.5 4L6 1L11 3L5 6.5ZM0.5 4V6L5 8.5V6.5M8 6L12 4L15.5 6L11 8.5ZM2 10L6 7.5L9 9.5L5 12Z" fill="#fff" stroke="#888"/><path d="M15 6L16.5 8L9 15L5.5 15.5L7 12.5Z" fill="#777"/></svg></button>
          <button aria-label="Window settings"><svg width="16" height="16" viewBox="0 0 16 16"><path d="M0.5 1.5H15.5V13.5H0.5Z" fill="#fff" stroke="#666"/><path d="M0 1H16V3H0Z" fill="#666"/>${gear(11, 11)}</svg></button>
        </div>
        <div class="zoom">
          <button aria-label="Zoom out"><svg width="10" height="10"><path d="M0 5.5H9" stroke="#999"/></svg></button>
          <input type="range" aria-label="Zoom" min="0" max="100" value="3" />
          <button aria-label="Zoom in"><svg width="10" height="10"><path d="M0 5.5H9M4.5 1V10" stroke="#999"/></svg></button>
        </div>
        <button aria-label="Fit to window"><svg width="16" height="16" viewBox="0 0 16 16"><path d="M8 0L11 4H5ZM8 16L11 12H5ZM0 8L4 5V11ZM16 8L12 5V11ZM8 5.5L10.5 8L8 10.5L5.5 8Z" fill="#b0b0b0"/></svg></button>
        <button class="bell" aria-label="Notifications"><svg width="14" height="16" viewBox="0 0 14 16"><path d="M7 1Q8 1 8 2.2Q11.5 3 11.5 7Q11.5 10 13.5 11.5V12.5H0.5V11.5Q2.5 10 2.5 7Q2.5 3 6 2.2Q6 1 7 1ZM5 13.5H9Q9 15 7 15Q5 15 5 13.5Z" fill="#333"/></svg></button>
        <svg width="12" height="16" viewBox="0 0 12 16"><path d="M8 5H10V7H8ZM4 9H6V11H4ZM8 9H10V11H8ZM0 13H2V15H0ZM4 13H6V15H4ZM8 13H10V15H8Z" fill="#aaa"/></svg>
      </footer>`;
  }
}
